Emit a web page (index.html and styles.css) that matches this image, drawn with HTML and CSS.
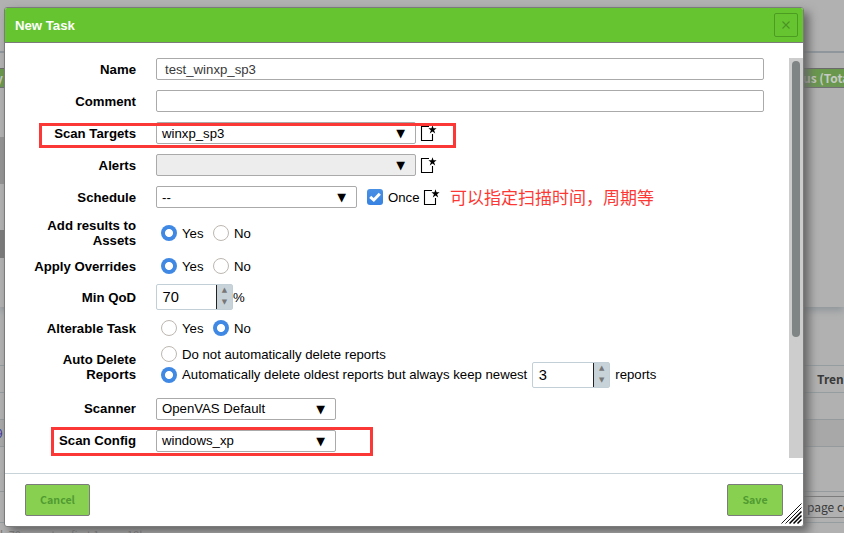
FILE: index.html
```html
<!DOCTYPE html>
<html lang="en">
<head>
<meta charset="utf-8">
<title>New Task</title>
<link rel="stylesheet" href="styles.css">
</head>
<body>
<svg class="defs" width="0" height="0"><defs>
<symbol id="new" viewBox="0 0 17 16"><path d="M9 1.5H1.5V15.5H12.5V9" fill="none" stroke="#000" stroke-width="1.1"/><path d="M12.5 0.3L13.5 3.3H16.6L14.1 5.2L15.2 8.5L12.5 6.5L9.8 8.5L10.9 5.2L8.4 3.3H11.5Z"/></symbol>
</defs></svg>

<div class="page">
  <div class="topbar"></div>
  <div class="panelhead"><b class="hl">y</b><b class="hr">us (Total</b></div>
  <div class="panel"><i class="slice a"></i><i class="slice b"></i></div>
  <div class="gap"></div>
  <div class="thead"><b>Trend</b></div>
  <div class="tr"></div>
  <div class="tr alt"><span>9</span></div>
  <div class="tr tall"></div>
  <div class="tfoot"><span class="pagesel">page co</span></div>
  <div class="filter">l: 70 reports: &nbsp; first 1 row: 18h</div>
</div>

<div class="dialog">
  <header class="head"><span>New Task</span><button class="close"><svg width="8" height="8" viewBox="0 0 8 8"><path d="M0.5 0.5L7.5 7.5M7.5 0.5L0.5 7.5"/></svg></button></header>
  <div class="body">
    <div class="form">
      <div class="row"><label>Name</label><div class="field"><div class="input">test_winxp_sp3</div></div></div>
      <div class="row"><label>Comment</label><div class="field"><div class="input"></div></div></div>
      <div class="row"><label>Scan Targets</label><div class="field"><div class="select w260"><span>winxp_sp3</span><i>▼</i></div><svg class="new"><use href="#new"/></svg></div></div>
      <div class="row"><label>Alerts</label><div class="field"><div class="select w260 off"><span></span><i>▼</i></div><svg class="new"><use href="#new"/></svg></div></div>
      <div class="row"><label>Schedule</label><div class="field"><div class="select w201"><span>--</span><i>▼</i></div><span class="check"><svg width="16" height="16" viewBox="0 0 16 16"><path d="M3.2 7.8L6.8 11L12.8 4.8"/></svg></span><span class="once">Once</span><svg class="new"><use href="#new"/></svg><span class="note">可以指定扫描时间，周期等</span></div></div>
      <div class="row"><label>Add results to Assets</label><div class="field radios"><span class="radio on"></span><span class="opt">Yes</span><span class="radio"></span><span>No</span></div></div>
      <div class="row"><label>Apply Overrides</label><div class="field radios"><span class="radio on"></span><span class="opt">Yes</span><span class="radio"></span><span>No</span></div></div>
      <div class="row"><label>Min QoD</label><div class="field"><div class="spin"><span>70</span><div class="arrows"><i>▲</i><i>▼</i></div></div><span>%</span></div></div>
      <div class="row"><label>Alterable Task</label><div class="field radios"><span class="radio"></span><span class="opt">Yes</span><span class="radio on"></span><span>No</span></div></div>
      <div class="row"><label>Auto Delete Reports</label><div class="field stack">
        <div class="radios"><span class="radio"></span><span>Do not automatically delete reports</span></div>
        <div class="radios"><span class="radio on"></span><span class="keep">Automatically delete oldest reports but always keep newest</span><div class="spin wide"><span>3</span><div class="arrows"><i>▲</i><i>▼</i></div></div><span class="unit">reports</span></div>
      </div></div>
      <div class="row lower"><label>Scanner</label><div class="field"><div class="select w180"><span>OpenVAS Default</span><i>▼</i></div></div></div>
      <div class="row lower"><label>Scan Config</label><div class="field"><div class="select w180"><span>windows_xp</span><i>▼</i></div></div></div>
    </div>
    <div class="track"><div class="thumb"></div></div>
  </div>
  <footer class="foot"><button class="btn cancel">Cancel</button><button class="btn save">Save</button></footer>
  <svg class="grip" width="21" height="21" viewBox="0 0 21 21"><path d="M0.5 20.5L20.5 0.5M4.5 20.5L20.5 4.5"/><path class="thick" d="M8.5 20.5L20.5 8.5M12.5 20.5L20.5 12.5M16.5 20.5L20.5 16.5"/></svg>
</div>
<div class="mark targets"></div>
<div class="mark config"></div>
</body>
</html>
```

FILE: styles.css
```css
* { box-sizing: border-box; }
body { margin: 0; width: 844px; height: 533px; overflow: hidden; position: relative; background: #b1b1b1; font: 13.2px/15px "Liberation Sans", Arial, sans-serif; color: #000; }
i { font-style: normal; }
.defs { position: absolute; }
.page { height: 533px; overflow: hidden; font-family: "Noto Sans CJK SC", sans-serif; font-size: 12px; display: flex; flex-direction: column; color: #393939; }
.page > div { flex: none; }
.topbar { height: 53px; border-bottom: 2px solid #8f979c; }
.panelhead { margin-top: 15px; height: 20px; background: #69984d; border: solid #696969; border-width: 1px 0; display: flex; justify-content: space-between; color: #c6cac3; line-height: 18px; }
.hl { width: 3px; display: flex; justify-content: flex-end; }
.hr { width: 41px; white-space: nowrap; }
.panel { height: 219px; box-shadow: 0 3px 8px #8b9398; padding-top: 49px; }
.slice { display: block; width: 10px; }
.slice.a { height: 47px; background: #939393; }
.slice.b { margin-top: 46px; height: 28px; background: #7a7a7a; }
.gap { height: 58px; }
.thead { height: 28px; border: solid #959da1; border-width: 1px 0; display: flex; align-items: center; padding: 0 0 2px 817px; }
.tr { height: 27px; border-bottom: 1px solid #959a9d; line-height: 26px; color: #3a32a0; overflow: hidden; }
.tr span { display: block; margin-left: -4px; }
.tr.alt { background: #a8a8a8; }
.tr.tall { height: 45px; }
.tfoot { height: 31px; border-bottom: 1px solid #959da1; padding: 4px 0 0 790px; }
.pagesel { display: block; height: 22px; border: solid #7c7c7c; border-width: 1px 0; padding-left: 17px; line-height: 20px; white-space: nowrap; }
.filter { height: 18px; font-size: 11px; line-height: 16px; padding: 3px 0 0; color: #787878; }
.dialog { position: absolute; left: 4px; top: 7px; width: 800px; height: 520px; display: flex; flex-direction: column; background: #fff; border: 1px solid #7b7b7b; border-radius: 3px; box-shadow: 5px 5px 10px #666; }
.head { height: 35px; flex: none; display: flex; align-items: center; justify-content: space-between; background: #66c430; border-bottom: 1px solid #7b7b7b; border-radius: 2px 2px 0 0; color: #fff; font-weight: bold; padding: 0 5px 0 10px; }
.close { width: 24px; height: 24px; padding: 0; background: none; border: 1px solid #4c9c22; border-radius: 2px; display: flex; align-items: center; justify-content: center; }
.close path { stroke: #4c9426; stroke-width: 1.2; fill: none; }
.body { height: 430px; flex: none; padding: 15px 0; display: flex; justify-content: space-between; }
.form { width: 759px; display: flex; flex-direction: column; gap: 10px; }
.row { display: grid; grid-template-columns: 111px 608px; column-gap: 20px; padding-left: 20px; align-items: center; }
.row label { text-align: right; font-weight: bold; }
.field, .radios { display: flex; align-items: center; white-space: nowrap; }
.input { width: 608px; height: 22px; border: 1px solid #aaa; border-radius: 2px; padding: 0 8px; line-height: 21px; color: #393939; }
.select { height: 22px; border: 1px solid #aaa; border-radius: 2px; padding: 0 9px 0 5px; line-height: 21px; display: flex; justify-content: space-between; }
.select i { font: 11.4px/21px "DejaVu Sans", sans-serif; padding-right: 1px; }
.lower .select { line-height: 19px; }
.lower label { padding-bottom: 1px; line-height: 14px; }
.w260 { width: 260px; } .w201 { width: 201px; } .w180 { width: 180px; }
.off { background: #ededed; }
.new { width: 17px; height: 16px; margin-left: 4px; }
.check { width: 16px; height: 16px; margin-left: 10px; border-radius: 3px; background: linear-gradient(#4a91e5, #3782e2); }
.check svg { display: block; }
.check path { fill: none; stroke: #fff; stroke-width: 3; }
.once { margin-left: 5px; width: 31px; }
.note { margin-left: 10px; font: 17px/20px "Noto Sans CJK SC", sans-serif; color: #fc3835; }
.radios { height: 16px; }
.radio { width: 16px; height: 16px; flex: none; margin: 0 5px; border: 1px solid #bdb7b1; border-radius: 50%; }
.radio.on { border: 0; background: radial-gradient(circle, #fff 3.6px, #3f89e4 4.4px); }
.opt { width: 26px; }
.opt + .radio { margin-left: 5px; }
.stack { display: block; }
.stack .radios + .radios { height: 26px; }
.stack .radios + .radios > span { position: relative; top: -0.5px; }
.spin { width: 77px; height: 26px; border: 1px solid #c3cfd6; border-radius: 2px; display: flex; justify-content: space-between; font-size: 14.67px; line-height: 24px; padding-left: 5.5px; }
.spin.wide { width: 78px; }
.arrows { width: 16px; height: 24px; background: #c8d3d9; border-left: 1px solid #222; display: flex; flex-direction: column; }
.arrows i { height: 12px; font: 7px/11px "DejaVu Sans", sans-serif; color: #777; text-align: center; }
.keep { margin-right: 5px; }
.unit { margin-left: 5px; }
.track { width: 14px; height: 400px; background: #cdcdcd; padding: 3px; }
.thumb { width: 8px; height: 276px; border-radius: 4px; background: #7f8484; }
.foot { flex: 1; border-top: 1px solid #c8d3d9; display: flex; justify-content: space-between; padding: 10px 20px; }
.btn { height: 32px; padding: 0; border: 1px solid #7b7b7b; border-radius: 2px; background: #88d150; color: #519b32; font: bold 10.67px/28px "Noto Sans CJK SC", sans-serif; }
.cancel { width: 65px; } .save { width: 56px; }
.grip { position: absolute; right: 1px; bottom: 2px; }
.grip path { stroke: #000; fill: none; stroke-width: 0.9; }
.grip .thick { stroke-width: 1.5; }
.mark { position: absolute; border: 3px solid #fb3836; }
.targets { left: 39px; top: 123px; width: 417px; height: 25px; }
.config { left: 51px; top: 427px; width: 322px; height: 29px; }
```
